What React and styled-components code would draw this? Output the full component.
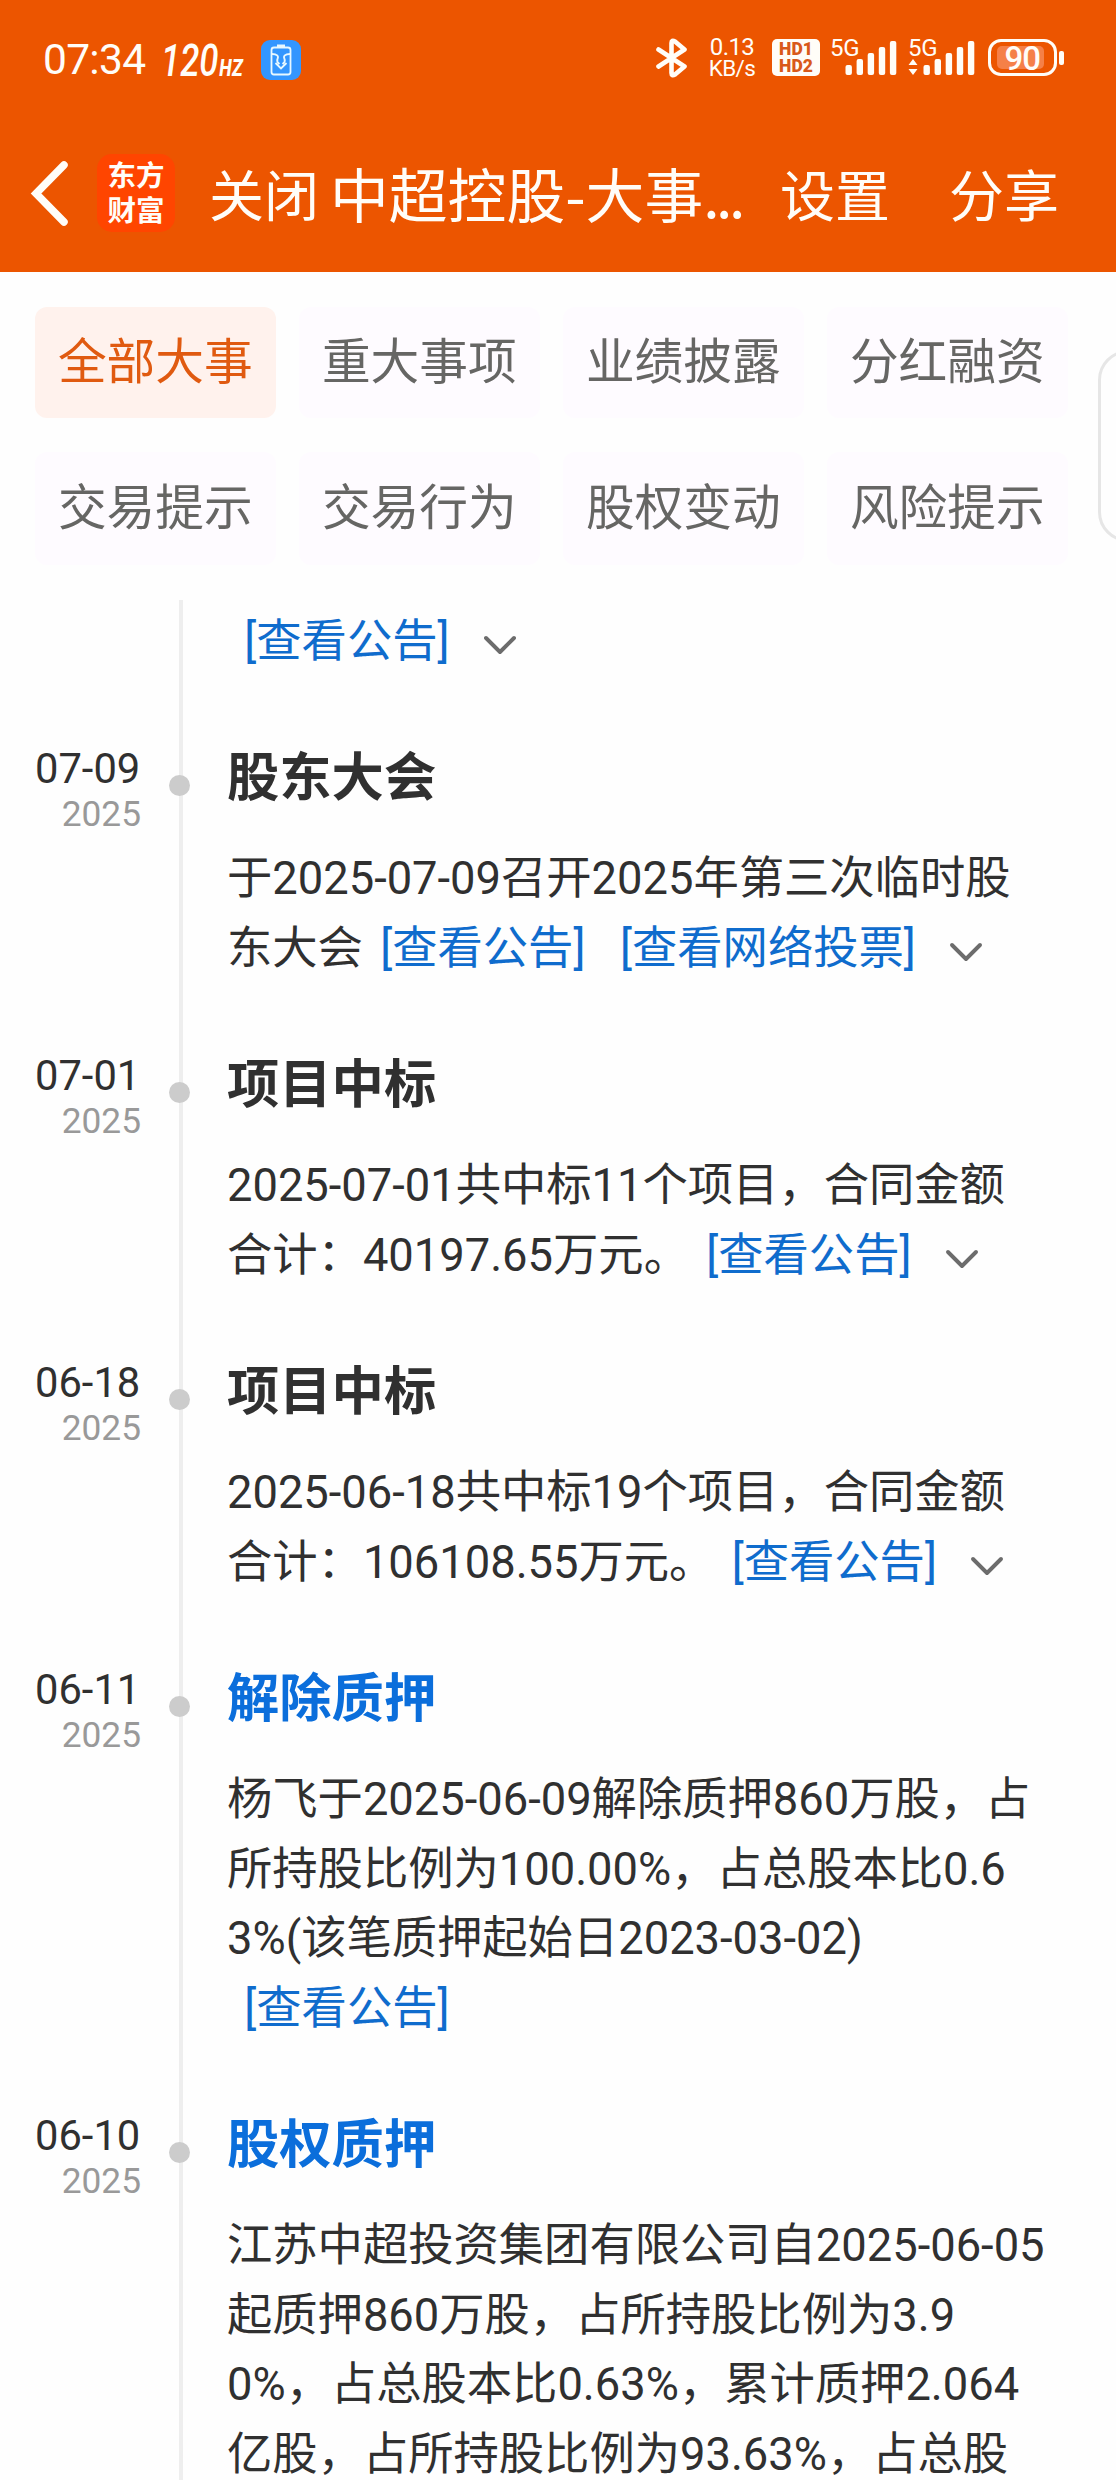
import React from "react";
import styled, { createGlobalStyle } from "styled-components";

const GlobalStyle = createGlobalStyle`
  * { box-sizing: border-box; }
  body { margin: 0; background: #fefefe; font-family: Roboto, "Noto Sans CJK SC", sans-serif; }
`;

const Page = styled.div`
  position: relative;
  width: 1116px;
  height: 2480px;
  overflow: hidden;
  background: #fefefe;
`;

const Header = styled.header`
  height: 272px;
  background: #ec5500;
  color: #fffdf8;
`;

const StatusBar = styled.div`
  display: flex;
  justify-content: space-between;
  height: 120px;
  padding: 36px 52px 0 43px;
`;

const StatusGroup = styled.div`
  display: flex;
  align-items: flex-start;
`;

const Clock = styled.span`
  width: 118px;
  font-size: 42.5px;
  line-height: 48px;
  letter-spacing: -0.7px;
`;

const Refresh = styled.span`
  display: block;
  width: 100px;
  font-size: 44px;
  font-weight: 500;
  font-style: italic;
  line-height: 50px;
  white-space: nowrap;
  transform: scaleX(0.79);
  transform-origin: left center;
  small { font-size: 23px; font-weight: 800; margin-left: 1px; letter-spacing: 0.5px; }
`;

const Speed = styled.div`
  display: flex;
  flex-direction: column;
  align-items: center;
  width: 46px;
  margin: 0 17px 0 21px;
  font-size: 24px;
  line-height: 22px;
  letter-spacing: -0.6px;
  span + span { font-size: 22.5px; line-height: 20px; }
`;

const HdBadge = styled.div`
  width: 48px;
  height: 37px;
  margin: 3px 10px 0 0;
  padding-top: 2px;
  border-radius: 5px;
  background: #fffdf8;
  color: #d9591a;
  font-size: 17.5px;
  font-weight: 900;
  line-height: 16.5px;
  text-align: center;
`;

const Signal = styled.svg`
  display: block;
  margin-right: 2px;
`;

const Battery = styled.div`
  display: flex;
  align-items: center;
  margin: 3px 0 0 2px;
`;

const BatteryShell = styled.div`
  width: 69px;
  height: 37px;
  padding: 3.5px 5.5px;
  border: 3.5px solid #fffdf8;
  border-radius: 13px;
`;

const BatteryLevel = styled.div`
  width: 47px;
  height: 23px;
  border-radius: 5px;
  background: #f58048;
  font-size: 33px;
  font-weight: 500;
  line-height: 25px;
  text-indent: 8px;
  letter-spacing: -1px;
`;

const BatteryTip = styled.div`
  width: 5px;
  height: 14px;
  margin-left: 2px;
  border-radius: 2px;
  background: #fffdf8;
`;

const NavBar = styled.nav`
  display: flex;
  align-items: center;
  height: 152px;
  padding-left: 29px;
  font-family: "Noto Sans CJK SC", sans-serif;
  white-space: nowrap;
`;

const AppLogo = styled.div`
  width: 78px;
  height: 78px;
  margin: -6px 0 0 25px;
  padding-top: 1.5px;
  border-radius: 15px;
  background: #ff4500;
  font-size: 28.5px;
  font-weight: 700;
  line-height: 35px;
  text-align: center;
`;

const NavAction = styled.span`
  width: 110px;
  margin-left: ${(p) => p.$gap}px;
  padding-bottom: 8px;
  font-size: 55px;
`;

const NavTitle = styled.h1`
  width: 412px;
  margin: 0 0 0 11px;
  padding-bottom: 7px;
  font-size: 58.8px;
  font-weight: 400;
`;

const Ellipsis = styled.span`
  letter-spacing: -3.5px;
`;

const Filters = styled.div`
  display: grid;
  grid-template-columns: repeat(4, 240.5px);
  grid-template-rows: 111px 113px;
  gap: 34px 23.5px;
  padding: 35px 0 0 35px;
`;

const Chip = styled.button`
  border: 0;
  padding: 0 0 10px;
  border-radius: 12px;
  background: ${(p) => (p.$active ? "#fff2ed" : "#fefbff")};
  color: ${(p) => (p.$active ? "#e05a10" : "#666664")};
  font-family: "Noto Sans CJK SC", sans-serif;
  font-size: 48.7px;
  white-space: nowrap;
`;

const Drawer = styled.div`
  position: absolute;
  left: 1098px;
  top: 350px;
  width: 60px;
  height: 192px;
  border: 3px solid #e6e6e6;
  border-radius: 30px;
`;

const Timeline = styled.main`
  margin-top: 35px;
`;

const Event = styled.section`
  display: grid;
  grid-template-columns: 141px 78px 1fr;
`;

const DateCell = styled.div`
  display: flex;
  flex-direction: column;
  align-items: flex-end;
  padding-top: 3.5px;
  white-space: nowrap;
`;

const Day = styled.span`
  width: 106px;
  color: #303030;
  font-size: 41.7px;
  line-height: 48px;
`;

const Year = styled.span`
  color: #999;
  font-size: 35.3px;
  line-height: 43.5px;
`;

const Rail = styled.div`
  position: relative;
  margin-left: 38px;
  width: 4px;
  background: #eee;
`;

const Dot = styled.i`
  position: absolute;
  left: -10.5px;
  top: 33.5px;
  width: 21px;
  height: 21px;
  border-radius: 50%;
  background: #ccc;
`;

const Content = styled.div`
  padding: ${(p) => (p.$headless ? 6.5 : 0.5)}px 0 65px 8px;
`;

const Title = styled.h2`
  margin: 0 0 30.5px;
  color: ${(p) => (p.$linked ? "#0b6edb" : "#303030")};
  font-size: 52.3px;
  font-weight: 700;
  line-height: 72px;
`;

const Line = styled.div`
  display: flex;
  align-items: center;
  height: 69.5px;
  color: #303030;
  font-size: 45.3px;
  line-height: 69.5px;
  white-space: nowrap;
`;

const Link = styled.a`
  margin: 0 17.3px;
  color: #0f6ccd;
`;

const Chevron = styled.svg`
  margin: 7px 0 0 15.8px;
`;

const filters = ["全部大事", "重大事项", "业绩披露", "分红融资", "交易提示", "交易行为", "股权变动", "风险提示"];

const events = [
  { lines: [{ links: ["[查看公告]"], more: true }] },
  {
    day: "07-09",
    title: "股东大会",
    lines: [
      { text: "于2025-07-09召开2025年第三次临时股" },
      { text: "东大会", links: ["[查看公告]", "[查看网络投票]"], more: true },
    ],
  },
  {
    day: "07-01",
    title: "项目中标",
    lines: [
      { text: "2025-07-01共中标11个项目，合同金额" },
      { text: "合计：40197.65万元。", links: ["[查看公告]"], more: true },
    ],
  },
  {
    day: "06-18",
    title: "项目中标",
    lines: [
      { text: "2025-06-18共中标19个项目，合同金额" },
      { text: "合计：106108.55万元。", links: ["[查看公告]"], more: true },
    ],
  },
  {
    day: "06-11",
    title: "解除质押",
    linked: true,
    lines: [
      { text: "杨飞于2025-06-09解除质押860万股，占" },
      { text: "所持股比例为100.00%，占总股本比0.6" },
      { text: "3%(该笔质押起始日2023-03-02)" },
      { links: ["[查看公告]"] },
    ],
  },
  {
    day: "06-10",
    title: "股权质押",
    linked: true,
    lines: [
      { text: "江苏中超投资集团有限公司自2025-06-05" },
      { text: "起质押860万股，占所持股比例为3.9" },
      { text: "0%，占总股本比0.63%，累计质押2.064" },
      { text: "亿股，占所持股比例为93.63%，占总股" },
    ],
  },
];

function SignalBars({ active }) {
  return (
    <Signal width="76" height="44" viewBox="0 0 76 44" fill="#fffdf8" overflow="visible">
      <text x="0" y="20" fontSize="24" fontFamily="Roboto" letterSpacing="-0.3">5G</text>
      {[0, 1, 2, 3, 4].map((i) => (
        <rect key={i} x={15.5 + i * 11.1} y={29 - i * 6} width="6.4" height={10 + i * 6} rx="2" />
      ))}
      {active && <path d="M0.5 29 5 23l4.500 6zM.5 33H9.500L5 39z" />}
    </Signal>
  );
}

function EventRow({ event }) {
  return (
    <Event>
      <DateCell>
        {event.day && <Day>{event.day}</Day>}
        {event.day && <Year>2025</Year>}
      </DateCell>
      <Rail>{event.day && <Dot />}</Rail>
      <Content $headless={!event.title}>
        {event.title && <Title $linked={event.linked}>{event.title}</Title>}
        {event.lines.map((line, i) => (
          <Line key={i}>
            {line.text && <span>{line.text}</span>}
            {line.links && line.links.map((l) => <Link key={l}>{l}</Link>)}
            {line.more && (
              <Chevron width="34" height="20" viewBox="0 0 34 20" fill="none" stroke="#6c6c6c" strokeWidth="3.900" strokeLinecap="round" strokeLinejoin="round">
                <path d="M3 3 17 17 31 3" />
              </Chevron>
            )}
          </Line>
        ))}
      </Content>
    </Event>
  );
}

export default function App() {
  return (
    <Page>
      <GlobalStyle />
      <Header>
        <StatusBar>
          <StatusGroup>
            <Clock>07:34</Clock>
            <Refresh>120<small>HZ</small></Refresh>
            <svg width="40" height="44" viewBox="0 0 40 44" fill="none">
              <rect y="4" width="40" height="40" rx="9" fill="#3396ff" />
              <rect x="10.500" y="11.500" width="19" height="27" rx="2.500" stroke="#e8f8ff" strokeWidth="1.800" />
              <path d="M16 10h8" stroke="#e8f8ff" strokeWidth="3" />
              <path d="M11 18c5 0 7 2 5.500 5-1 2 0 3.500 2 5M29 18c-5 0-7 2-5.500 5 1 2 0 3.500-2 5M14.500 27l5.500 5.500 5.500-5.500" stroke="#e8f8ff" strokeWidth="1.800" />
            </svg>
          </StatusGroup>
          <StatusGroup>
            <svg width="32" height="44" viewBox="0 0 32 44" fill="none" stroke="#fffdf8" strokeWidth="4.600" strokeLinecap="round" strokeLinejoin="round">
              <path d="M2.500 13.500 28.500 30.500 19 38.500Q15.500 40.500 15.500 37V7Q15.500 3.500 19 5.500L28.500 13.500 2.500 30.500" />
            </svg>
            <Speed><span>0.13</span><span>KB/s</span></Speed>
            <HdBadge><div>HD1</div><div>HD2</div></HdBadge>
            <SignalBars />
            <SignalBars active />
            <Battery>
              <BatteryShell><BatteryLevel>90</BatteryLevel></BatteryShell>
              <BatteryTip />
            </Battery>
          </StatusGroup>
        </StatusBar>
        <NavBar>
          <svg width="43" height="70" viewBox="0 0 43 70" fill="none" stroke="#fffdf8" strokeWidth="7.500" strokeLinecap="round" strokeLinejoin="miter">
            <path d="M35 4 7 32.500 35 61" />
          </svg>
          <AppLogo><div>东方</div><div>财富</div></AppLogo>
          <NavAction $gap={34}>关闭</NavAction>
          <NavTitle>中超控股-大事<Ellipsis>...</Ellipsis></NavTitle>
          <NavAction $gap={38}>设置</NavAction>
          <NavAction $gap={59}>分享</NavAction>
        </NavBar>
      </Header>
      <Filters>
        {filters.map((f, i) => <Chip key={f} $active={i === 0}>{f}</Chip>)}
      </Filters>
      <Drawer />
      <Timeline>
        {events.map((e, i) => <EventRow key={i} event={e} />)}
      </Timeline>
    </Page>
  );
}
